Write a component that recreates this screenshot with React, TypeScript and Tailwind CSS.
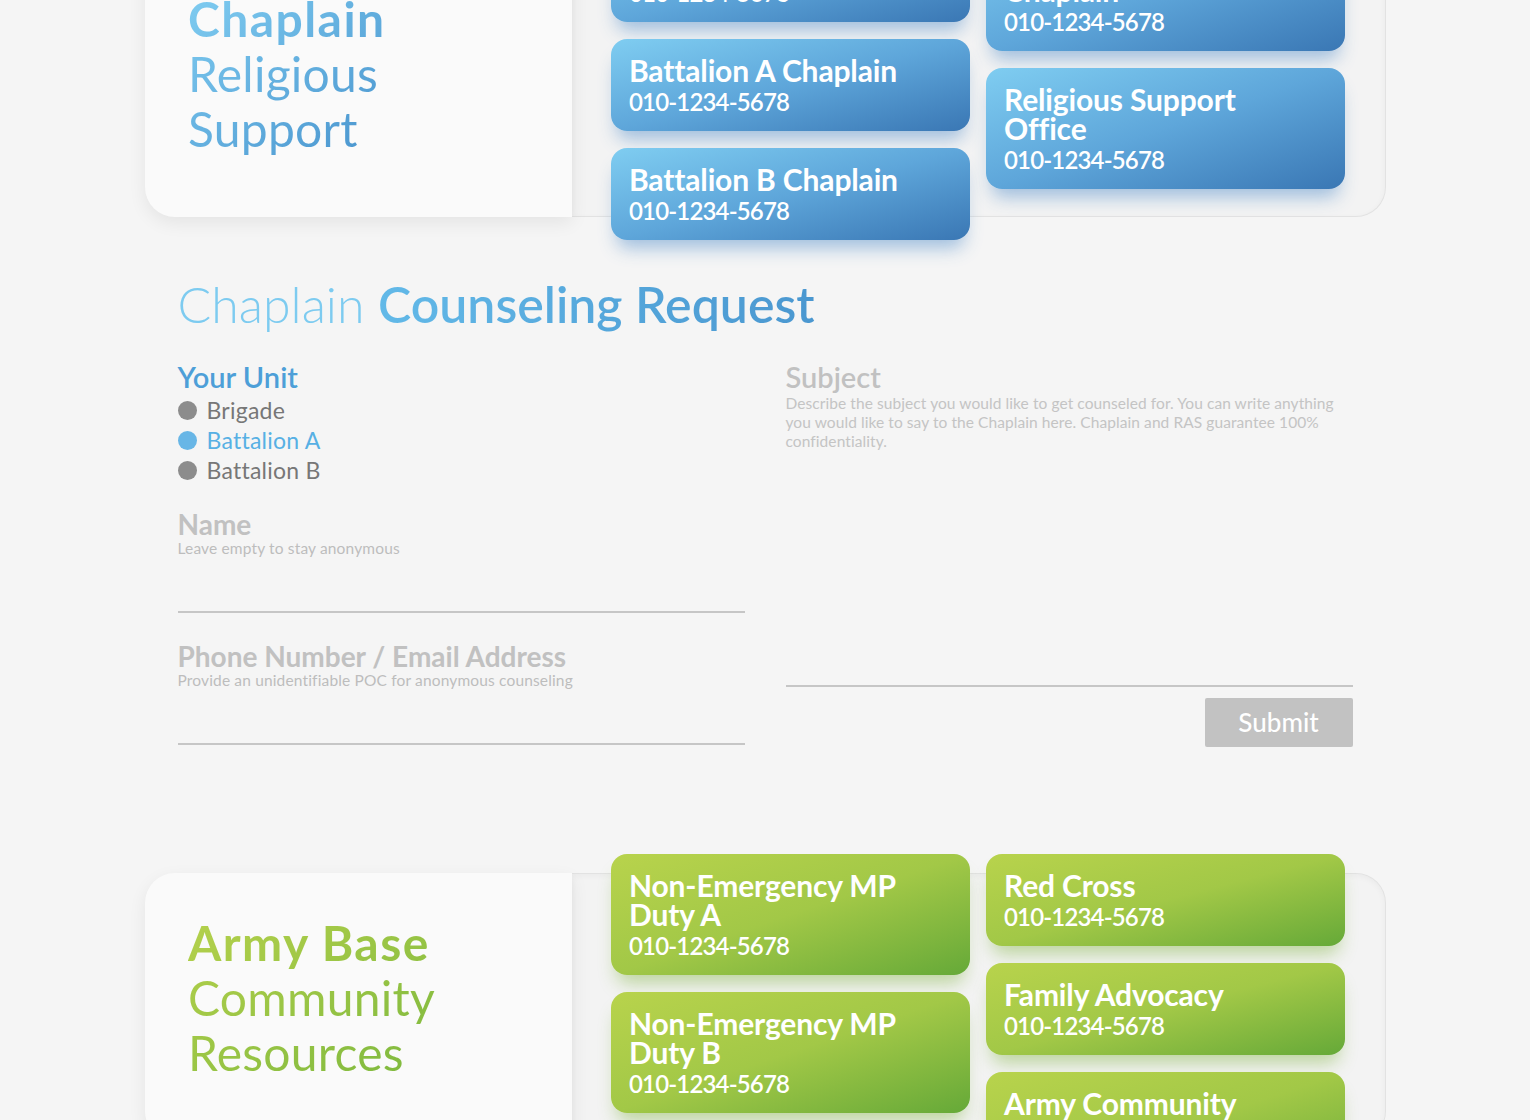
import React from "react";

type Card = { title: string[]; phone: string };

const blueCol1: Card[] = [
  { title: ["Brigade Chaplain"], phone: "010-1234-5678" },
  { title: ["Battalion A Chaplain"], phone: "010-1234-5678" },
  { title: ["Battalion B Chaplain"], phone: "010-1234-5678" },
];
const blueCol2: Card[] = [
  { title: ["Garrison Command", "Chaplain"], phone: "010-1234-5678" },
  { title: ["Religious Support", "Office"], phone: "010-1234-5678" },
];
const greenCol1: Card[] = [
  { title: ["Non-Emergency MP", "Duty A"], phone: "010-1234-5678" },
  { title: ["Non-Emergency MP", "Duty B"], phone: "010-1234-5678" },
];
const greenCol2: Card[] = [
  { title: ["Red Cross"], phone: "010-1234-5678" },
  { title: ["Family Advocacy"], phone: "010-1234-5678" },
  { title: ["Army Community", "Service"], phone: "010-1234-5678" },
];

function ContactCard({ card, green }: { card: Card; green?: boolean }) {
  return (
    <div
      className={
        green
          ? "w-[359px] rounded-[16px] bg-gradient-to-br from-[#b8d34c] via-[#a2c847] to-[#65a938] pt-[17px] pb-[13px] px-[18px] text-white shadow-[0_14px_18px_-6px_rgba(120,175,50,0.45)]"
          : "w-[359px] rounded-[16px] bg-gradient-to-br from-[#7fcdf1] via-[#5ea6da] to-[#3a77b4] pt-[17px] pb-[13px] px-[18px] text-white shadow-[0_14px_18px_-6px_rgba(55,125,195,0.45)]"
      }
    >
      <div className="text-[30px] leading-[29px] font-bold tracking-[-0.005em]">
        {card.title.map((t) => (
          <div key={t} className="whitespace-nowrap">
            {t}
          </div>
        ))}
      </div>
      <div className="text-[24px] leading-[33px] font-semibold tracking-[-0.035em]">{card.phone}</div>
    </div>
  );
}

function Section({
  lines,
  col1,
  col2,
  green,
}: {
  lines: string[];
  col1: Card[];
  col2: Card[];
  green?: boolean;
}) {
  return (
    <div className="mx-auto flex h-[268px] w-[1240px]">
      <div className="relative z-10 w-[427px] shrink-0 rounded-l-[30px] bg-[#fafafa] pl-[43px] pt-[42px] shadow-[0_6px_18px_rgba(0,0,0,0.07)]">
        <div
          className={
            green
              ? "inline-block bg-gradient-to-br from-[#b5d14c] to-[#7cb83e] bg-clip-text text-[48px] leading-[55px] text-transparent"
              : "inline-block bg-gradient-to-br from-[#80cdf1] to-[#4893cd] bg-clip-text text-[48px] leading-[55px] text-transparent"
          }
        >
          <div className="font-bold tracking-[0.03em]">{lines[0]}</div>
          <div className="font-normal tracking-[0.005em]">{lines[1]}</div>
          <div className="font-normal tracking-[0.005em]">{lines[2]}</div>
        </div>
      </div>
      <div className="flex flex-1 gap-[16px] rounded-r-[30px] border border-l-0 border-[#e2e2e2] bg-[#f3f3f3] pl-[39px] pr-[40px] shadow-[inset_0_2px_6px_rgba(0,0,0,0.04)]">
        <div className="-mt-[20px] flex flex-col gap-[17px]">
          {col1.map((c, i) => (
            <ContactCard key={i} card={c} green={green} />
          ))}
        </div>
        <div className="-mt-[20px] flex flex-col gap-[17px]">
          {col2.map((c, i) => (
            <ContactCard key={i} card={c} green={green} />
          ))}
        </div>
      </div>
    </div>
  );
}

function Radio({ label, active }: { label: string; active?: boolean }) {
  return (
    <div className="flex h-[30px] items-center gap-[10px]">
      <span className={active ? "h-[19px] w-[19px] rounded-full bg-[#68b6e6]" : "h-[19px] w-[19px] rounded-full bg-[#8c8c8c]"} />
      <span className={active ? "text-[23px] tracking-[0.01em] text-[#57b0e4]" : "text-[23px] tracking-[0.01em] text-[#777777]"}>
        {label}
      </span>
    </div>
  );
}

export default function App() {
  return (
    <div className="h-[1120px] overflow-hidden bg-[#f5f5f5] font-['Lato','Liberation_Sans',sans-serif]">
      <div className="-mt-[51px]">
        <Section lines={["Chaplain", "Religious", "Support"]} col1={blueCol1} col2={blueCol2} />
      </div>

      <div className="mx-auto mt-[57px] w-[1175px]">
        <h1 className="text-[50px] leading-[60px]">
          <span className="font-light text-[#7dcbf0]">Chaplain </span>
          <span className="bg-gradient-to-r from-[#62b9e8] to-[#4a97d0] bg-clip-text font-semibold text-transparent">
            Counseling Request
          </span>
        </h1>

        <div className="mt-[26px] grid grid-cols-2 gap-[41px]">
          <div className="flex flex-col">
            <div className="text-[29px] leading-[34px] font-semibold text-[#4d9fd8]">Your Unit</div>
            <div className="mt-[1px] flex flex-col">
              <Radio label="Brigade" />
              <Radio label="Battalion A" active />
              <Radio label="Battalion B" />
            </div>

            <div className="mt-[24px] text-[28px] leading-[30px] font-bold text-[#c1c1c1]">Name</div>
            <div className="text-[15.5px] leading-[18px] tracking-[0.01em] text-[#bdbdbd]">Leave empty to stay anonymous</div>
            <input className="h-[56px] w-full border-b-2 border-[#c6c6c6] bg-transparent outline-none" />

            <div className="mt-[28px] text-[28px] leading-[30px] font-bold text-[#c1c1c1]">
              Phone Number / Email Address
            </div>
            <div className="text-[15.5px] leading-[18px] tracking-[0.01em] text-[#bdbdbd]">
              Provide an unidentifiable POC for anonymous counseling
            </div>
            <input className="h-[56px] w-full border-b-2 border-[#c6c6c6] bg-transparent outline-none" />
          </div>

          <div className="flex flex-col">
            <div className="text-[29px] leading-[34px] font-semibold text-[#c1c1c1]">Subject</div>
            <div className="text-[15.5px] leading-[19px] tracking-[0.005em] text-[#c4c4c4]">
              <div className="whitespace-nowrap">
                Describe the subject you would like to get counseled for. You can write anything
              </div>
              <div className="whitespace-nowrap">
                you would like to say to the Chaplain here. Chaplain and RAS guarantee 100%
              </div>
              <div className="whitespace-nowrap">confidentiality.</div>
            </div>
            <textarea className="h-[236px] w-full resize-none border-b-2 border-[#c6c6c6] bg-transparent outline-none" />
            <button className="mt-[11px] h-[49px] w-[148px] self-end rounded-[2px] bg-[#c2c2c2] text-[26px] font-medium text-white">
              Submit
            </button>
          </div>
        </div>
      </div>

      <div className="mt-[126px]">
        <Section
          lines={["Army Base", "Community", "Resources"]}
          col1={greenCol1}
          col2={greenCol2}
          green
        />
      </div>
    </div>
  );
}
